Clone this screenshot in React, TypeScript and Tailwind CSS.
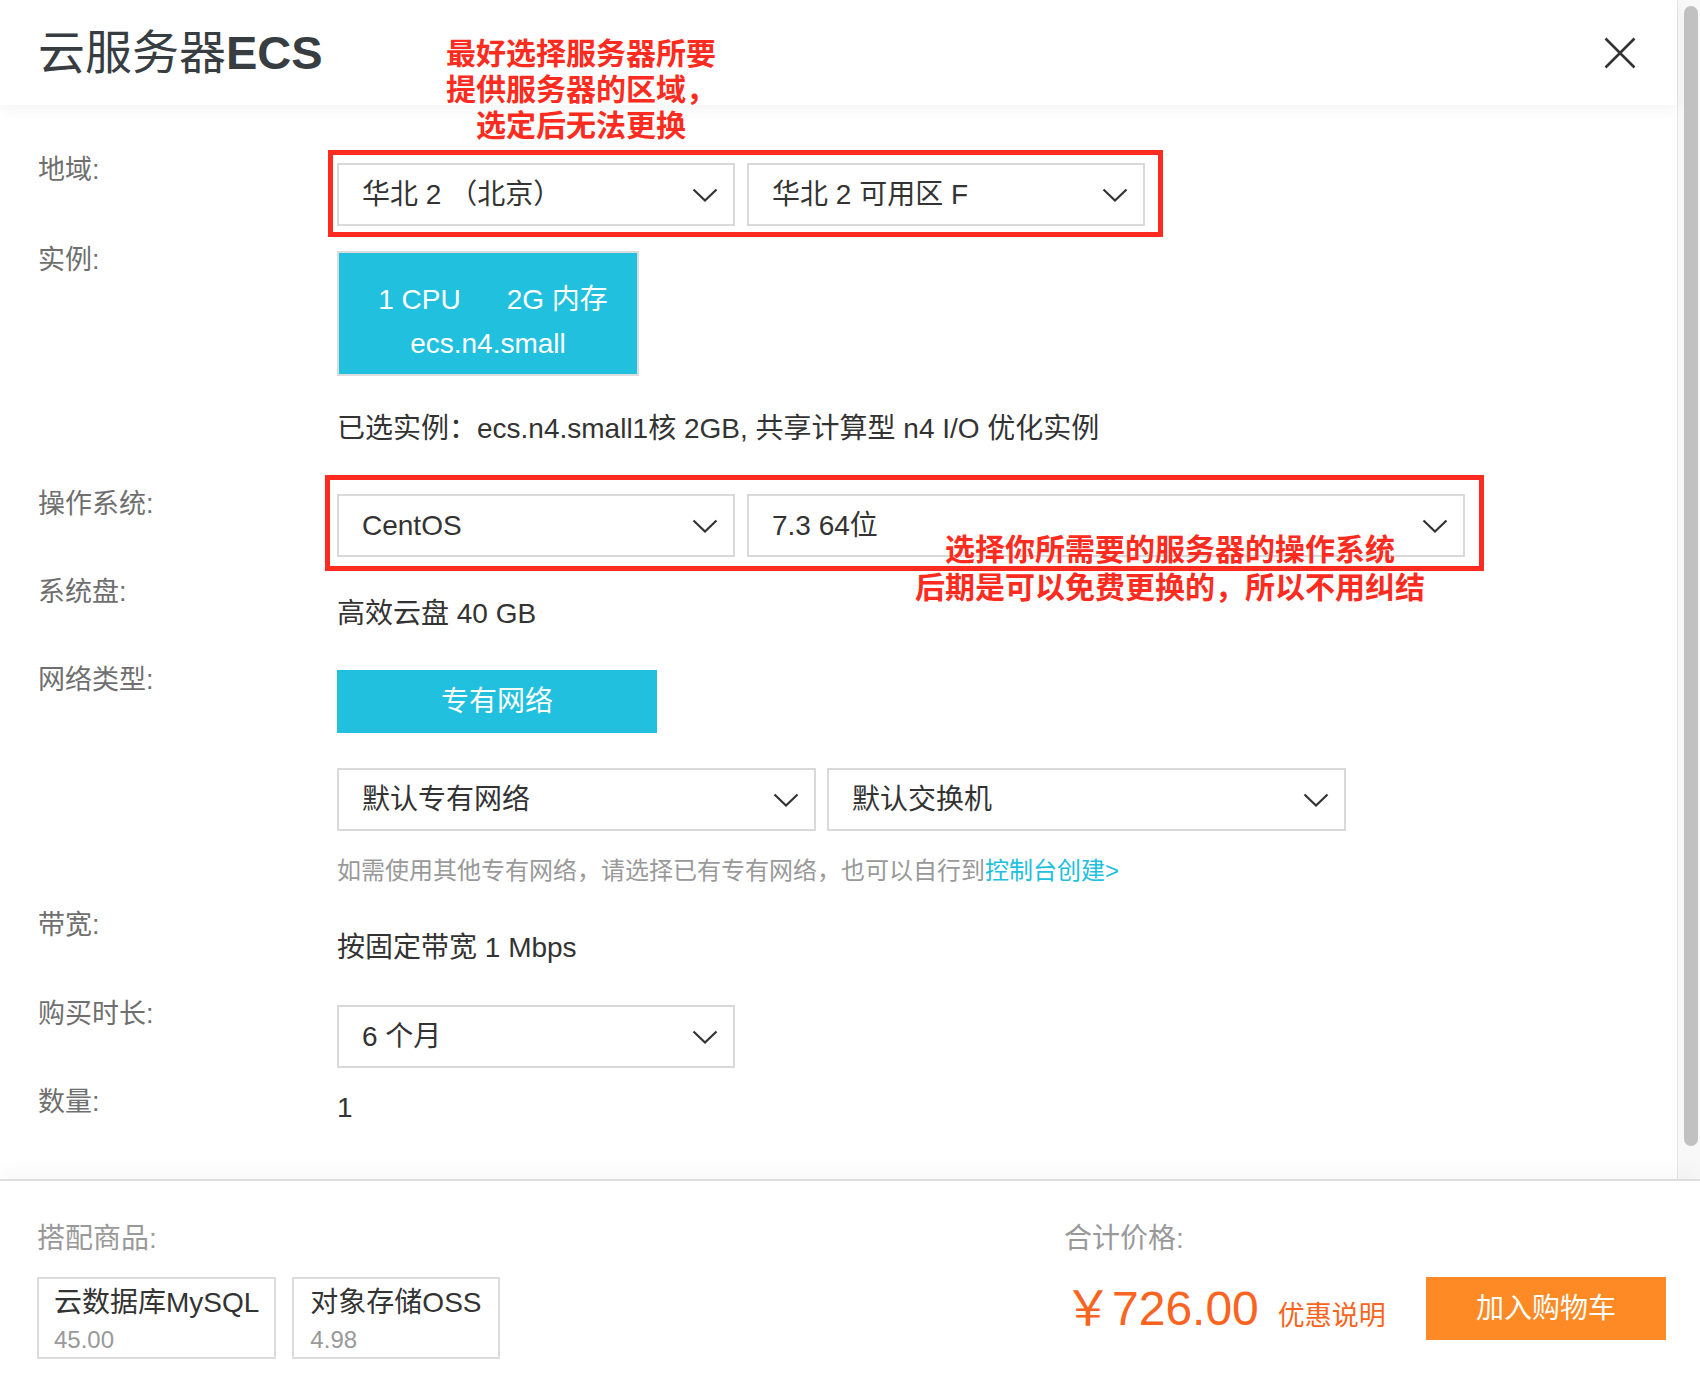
import React from 'react';

const FONT = "font-['Liberation_Sans','Noto_Sans_CJK_SC',sans-serif]";

const Chevron = () => (
  <svg width="26" height="14" viewBox="0 0 26 14" fill="none">
    <path d="M1.5 1.5 L13 12.5 L24.5 1.5" stroke="#333" strokeWidth="2.2" />
  </svg>
);

const Select = ({ text, width }: { text: string; width: string }) => (
  <div className={`flex items-center justify-between h-[63px] border-2 border-[#d9d9d9] bg-white pl-[23px] pr-[15px] ${width}`}>
    <span className="text-[28px] leading-[36px] text-[#333]">{text}</span>
    <Chevron />
  </div>
);

const Label = ({ children }: { children: React.ReactNode }) => (
  <div className="w-[299px] shrink-0 text-[27px] leading-[36px] text-[#6f6f6f]">{children}</div>
);

const Row = ({ label, className, children }: { label: string; className: string; children: React.ReactNode }) => (
  <div className={`flex items-start ${className}`}>
    <Label>{label}</Label>
    <div className="flex-1">{children}</div>
  </div>
);

export default function App() {
  return (
    <div className={`w-[1700px] h-[1374px] flex flex-col bg-white overflow-hidden ${FONT}`}>
      {/* scrollable part */}
      <div className="flex h-[1179px]">
        <div className="relative w-[1677px] flex flex-col">
          {/* header */}
          <div className="relative z-10 h-[105px] shrink-0 flex items-center justify-between pl-[38px] pr-[41px] bg-white shadow-[0_4px_14px_rgba(0,0,0,0.05)]">
            <h1 className="text-[47px] leading-none text-[#373d41]">
              云服务器<span className="font-bold">ECS</span>
            </h1>
            <svg width="32" height="32" viewBox="0 0 32 32">
              <path d="M1.5 1.5 L30.5 30.5 M30.5 1.5 L1.5 30.5" stroke="#333" strokeWidth="2.6" />
            </svg>
          </div>

          {/* form */}
          <div className="flex-1 pl-[38px] text-[#333]">
            <Row label="地域:" className="mt-[47px]">
              <div className="pt-[11px] flex gap-[12px]">
                <Select text="华北 2 （北京）" width="w-[398px]" />
                <Select text="华北 2 可用区 F" width="w-[398px]" />
              </div>
            </Row>

            <Row label="实例:" className="mt-[16px]">
              <div className="pt-[9px]">
                <div className="w-[302px] h-[125px] border-2 border-[#dcdcdc] bg-[#20c0de] text-white text-[28px] pt-[25px]">
                  <div className="flex justify-center gap-[46px] pl-[10px] leading-[44px]">
                    <span>1 CPU</span>
                    <span>2G 内存</span>
                  </div>
                  <div className="text-center leading-[44px]">ecs.n4.small</div>
                </div>
              </div>
            </Row>

            <div className="mt-[35px] ml-[299px] text-[28px] leading-[36px]">
              已选实例：ecs.n4.small1核 2GB, 共享计算型 n4 I/O 优化实例
            </div>

            <Row label="操作系统:" className="mt-[39px]">
              <div className="pt-[8px] flex gap-[12px]">
                <Select text="CentOS" width="w-[398px]" />
                <Select text="7.3 64位" width="w-[718px]" />
              </div>
            </Row>

            <Row label="系统盘:" className="mt-[17px]">
              <div className="pt-[22px] text-[28px] leading-[36px]">高效云盘 40 GB</div>
            </Row>

            <Row label="网络类型:" className="mt-[30px]">
              <div className="pt-[8px]">
                <div className="w-[320px] h-[63px] flex items-center justify-center bg-[#20c0de] text-white text-[28px]">
                  专有网络
                </div>
                <div className="mt-[35px] flex gap-[11px]">
                  <Select text="默认专有网络" width="w-[479px]" />
                  <Select text="默认交换机" width="w-[519px]" />
                </div>
                <div className="mt-[24px] text-[24px] leading-[32px] text-[#999]">
                  如需使用其他专有网络，请选择已有专有网络，也可以自行到
                  <span className="text-[#20c0de]">控制台创建&gt;</span>
                </div>
              </div>
            </Row>

            <Row label="带宽:" className="mt-[20px]">
              <div className="pt-[23px] text-[28px] leading-[36px]">按固定带宽 1 Mbps</div>
            </Row>

            <Row label="购买时长:" className="mt-[30px]">
              <div className="pt-[9px]">
                <Select text="6 个月" width="w-[398px]" />
              </div>
            </Row>

            <Row label="数量:" className="mt-[16px]">
              <div className="pt-[6px] text-[28px] leading-[36px]">1</div>
            </Row>
          </div>

          {/* annotations */}
          <div className="absolute z-20 left-[431px] top-[36px] w-[300px] text-center text-[30px] leading-[36px] font-bold text-[#fe2c20]">
            <div>最好选择服务器所要</div>
            <div>提供服务器的区域，</div>
            <div>选定后无法更换</div>
          </div>
          <div className="absolute left-[328px] top-[150px] w-[835px] h-[87px] border-[5px] border-[#fe2c20]" />
          <div className="absolute left-[325px] top-[475px] w-[1159px] h-[96px] border-[5px] border-[#fe2c20]" />
          <div className="absolute z-20 left-[900px] top-[531px] w-[540px] text-center text-[30px] leading-[38px] font-bold text-[#fe2c20]">
            <div>选择你所需要的服务器的操作系统</div>
            <div>后期是可以免费更换的，所以不用纠结</div>
          </div>
        </div>

        {/* scrollbar */}
        <div className="w-[23px] h-full bg-[#f8f8f8] border-l border-[#e6e6e6] pt-[6px] pl-[6px]">
          <div className="w-[14px] h-[1140px] rounded-full bg-[#c1c1c1]" />
        </div>
      </div>

      {/* footer */}
      <div className="relative z-10 flex-1 flex justify-between border-t-2 border-[#dedede] bg-white pl-[37px] pr-[34px] pt-[40px] shadow-[0_-8px_20px_rgba(0,0,0,0.03)]">
        <div>
          <div className="text-[28px] leading-[36px] text-[#999]">搭配商品:</div>
          <div className="mt-[20px] flex gap-[16px]">
            <div className="h-[82px] border-2 border-[#dcdcdc] px-[15px] pt-[7px]">
              <div className="text-[28px] leading-[34px] text-[#333]">云数据库MySQL</div>
              <div className="mt-[5px] text-[24px] leading-[30px] text-[#999]">45.00</div>
            </div>
            <div className="h-[82px] border-2 border-[#dcdcdc] px-[16px] pt-[7px]">
              <div className="text-[28px] leading-[34px] text-[#333]">对象存储OSS</div>
              <div className="mt-[5px] text-[24px] leading-[30px] text-[#999]">4.98</div>
            </div>
          </div>
        </div>

        <div className="w-[602px]">
          <div className="text-[28px] leading-[36px] text-[#999]">合计价格:</div>
          <div className="mt-[20px] flex items-center justify-between">
            <div className="flex items-baseline text-[#fa6420]">
              <span className="text-[48px] leading-[63px]">￥726.00</span>
              <span className="ml-[19px] text-[27px]">优惠说明</span>
            </div>
            <div className="w-[240px] h-[63px] flex items-center justify-center bg-[#fd8a25] text-white text-[28px]">
              加入购物车
            </div>
          </div>
        </div>
      </div>
    </div>
  );
}
